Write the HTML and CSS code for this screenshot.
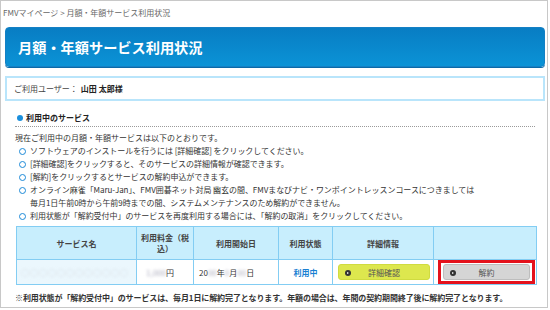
FILE: index.html
```html
<!DOCTYPE html>
<html lang="ja">
<head>
<meta charset="utf-8">
<title>月額・年額サービス利用状況</title>
<link rel="stylesheet" href="styles.css">
</head>
<body>
<div class="frame">
  <div class="crumb">FMVマイページ &gt; 月額・年額サービス利用状況</div>
  <h1 class="title">月額・年額サービス利用状況</h1>
  <div class="user">ご利用ユーザー： <b>山田 太郎様</b></div>
  <div class="content">
    <h2 class="sec"><span class="dot"></span>利用中のサービス</h2>
    <p class="lead">現在ご利用中の月額・年額サービスは以下のとおりです。</p>
    <ul class="notes">
      <li>ソフトウェアのインストールを行うには [詳細確認] をクリックしてください。</li>
      <li>[詳細確認]をクリックすると、そのサービスの詳細情報が確認できます。</li>
      <li>[解約]をクリックするとサービスの解約申込ができます。</li>
      <li>オンライン麻雀「Maru-Jan」、FMV囲碁ネット対局 幽玄の間、FMVまなびナビ・ワンポイントレッスンコースにつきましては<br>毎月1日午前0時から午前9時までの間、システムメンテナンスのため解約ができません。</li>
      <li>利用状態が「解約受付中」のサービスを再度利用する場合には、「解約の取消」をクリックしてください。</li>
    </ul>
    <table class="svc">
      <colgroup>
        <col class="c1"><col class="c2"><col class="c3"><col class="c4"><col class="c5"><col class="c6">
      </colgroup>
      <thead>
        <tr>
          <th>サービス名</th>
          <th>利用料金（税込）</th>
          <th>利用開始日</th>
          <th>利用状態</th>
          <th>詳細情報</th>
          <th></th>
        </tr>
      </thead>
      <tbody>
        <tr>
          <td class="name"><span class="blur wide">○○○○○○○○○○○○</span></td>
          <td class="price"><span class="blur">1,000</span>円</td>
          <td class="date">20<span class="blur">00</span>年<span class="blur">0</span>月<span class="blur">00</span>日</td>
          <td class="state">利用中</td>
          <td class="act"><a class="btn btn-detail"><span class="ico"></span>詳細確認</a></td>
          <td class="act"><span class="mark"><a class="btn btn-cancel"><span class="ico"></span>解約</a></span></td>
        </tr>
      </tbody>
    </table>
    <p class="foot">※利用状態が「解約受付中」のサービスは、毎月1日に解約完了となります。年額の場合は、年間の契約期間終了後に解約完了となります。</p>
  </div>
</div>
</body>
</html>
```
FILE: styles.css
```css
* { box-sizing: border-box; }
html, body { margin: 0; padding: 0; background: #fff; }
body {
  font-family: "Noto Sans CJK JP", "Noto Sans", sans-serif;
  font-size: 8px;
  color: #333;
}
.frame {
  width: 548px;
  height: 308px;
  border: 1px solid #c8c8c8;
  overflow: hidden;
}
.crumb {
  padding: 6px 0 0 2px;
  line-height: 12px;
  font-size: 8px;
  color: #666;
}
.title {
  margin: 8px 2px 0 4px;
  height: 40px;
  padding-left: 12px;
  display: flex;
  align-items: center;
  font-size: 14.2px;
  font-weight: bold;
  color: #fff;
  background: linear-gradient(#087dc3, #0b93d6);
  border: 1px solid #1580c4;
  border-radius: 4px;
  box-shadow: 0 1px 0 #0a6aa8;
}
.user {
  margin: 9px 2px 0 4px;
  height: 25px;
  border: 2px solid #b9e5fb;
  padding-left: 7px;
  display: flex;
  align-items: center;
  color: #444;
}
.user b { margin-left: 3px; color: #222; }
.content { padding: 0 12px 0 14px; }
.sec {
  margin: 11px 0 0 0;
  font-size: 8px;
  font-weight: bold;
  line-height: 12px;
  padding: 0 0 2px 2px;
  border-bottom: 1px dotted #9a9a9a;
  display: flex;
  align-items: center;
  color: #222;
}
.dot {
  width: 6px; height: 6px;
  border-radius: 50%;
  background: #1a8fdc;
  margin-right: 3px;
}
.lead { margin: 5px 0 0 0; line-height: 12px; }
.notes { list-style: none; margin: 0; padding: 0 0 0 15px; line-height: 13px; letter-spacing: -0.05px; }
.notes li { position: relative; }
.notes li::before {
  content: "";
  position: absolute;
  left: -11px; top: 4px;
  width: 5px; height: 5px;
  border: 1.5px solid #1d8ad8;
  border-radius: 50%;
}
.svc {
  margin-top: 4px;
  width: 520px;
  margin-left: 1px;
  table-layout: fixed;
  border-collapse: collapse;
}
.c1 { width: 120px; } .c2 { width: 57px; } .c3 { width: 85px; }
.c4 { width: 54px; } .c5 { width: 101px; } .c6 { width: 103px; }
.svc th, .svc td { border: 1px solid #83cdf3; }
.svc th {
  background: #c8eefd;
  height: 33px;
  font-weight: bold;
  color: #444;
  line-height: 11px;
  padding: 0 3px;
}
.svc td { height: 25px; padding: 0 4px; background: #fff; white-space: nowrap; }
.svc td.name { background: #ebf7fd; }
.svc td.price { padding-left: 9px; }
.svc td.date { padding-left: 5px; }
.svc td.state { text-align: center; color: #1a80d2; font-weight: bold; }
.svc td.act { padding: 0 3px 0 5px; }
.blur { color: #aab; filter: blur(1.4px); }
.blur.wide { color: #c4c8cc; letter-spacing: 1px; }
.btn {
  display: flex;
  align-items: center;
  height: 16px;
  border-radius: 3px;
  position: relative;
  justify-content: center;
  color: #555;
}
.btn .ico {
  position: absolute;
  left: 6px; top: 5px;
  width: 6px; height: 6px;
  border-radius: 50%;
  background: #333;
}
.btn .ico::after {
  content: "";
  position: absolute;
  left: 2px; top: 1.5px;
  border-left: 2.5px solid #fff;
  border-top: 1.5px solid transparent;
  border-bottom: 1.5px solid transparent;
}
.btn-detail { background: #dde74e; border: 1px solid #d0db40; }
.btn-cancel { background: #d5d5d5; border: 1px solid #bdbdbd; }
.mark {
  display: block;
  border: 3px solid #e4121c;
  padding: 1px 2px 1px 2px;
  margin: -1px -2px -1px -1px;
  position: relative;
}
.foot { margin: 7px 0 0 0; line-height: 12px; font-weight: bold; color: #333; letter-spacing: -0.1px; }
```
